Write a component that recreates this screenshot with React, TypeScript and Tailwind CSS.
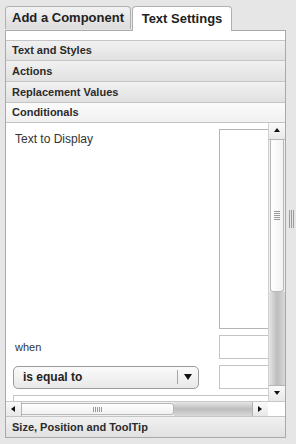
import React from "react";

const font = { fontFamily: '"Liberation Sans", Arial, sans-serif' };

function Header({ label, active }: { label: string; active?: boolean }) {
  return (
    <div
      className={`h-[21px] flex items-center pl-[6px] text-[11px] font-bold text-[#2b2b2b] border-b border-[#c4c4c4] ${
        active
          ? "bg-gradient-to-b from-[#fbfbfb] to-[#f1f1f1]"
          : "bg-gradient-to-b from-[#f1f1f1] to-[#e1e1e1]"
      }`}
    >
      {label}
    </div>
  );
}

function Arrow({ dir }: { dir: "up" | "down" | "left" | "right" }) {
  const pts = {
    up: "1,5 4,1 7,5",
    down: "1,1 4,5 7,1",
    left: "5,1 1,4 5,7",
    right: "1,1 5,4 1,7",
  }[dir];
  return (
    <svg width="8" height="8" viewBox="0 0 8 8">
      <polygon points={pts} fill="#111" />
    </svg>
  );
}

function VScrollbar() {
  return (
    <div className="w-[17px] flex flex-col bg-[#f0f0f0] border-l border-[#d0d0d0]">
      <div className="h-[17px] flex items-center justify-center bg-gradient-to-b from-[#fafafa] to-[#e8e8e8] border-b border-[#b5b5b5]">
        <Arrow dir="up" />
      </div>
      <div className="h-[152px] mx-[1px] rounded-b-[3px] bg-gradient-to-r from-[#ffffff] to-[#f2f2f2] border border-t-0 border-[#b8b8b8] flex items-center justify-center">
        <div className="flex flex-col gap-[1px]">
          {[0, 1, 2, 3, 4].map((i) => (
            <div key={i} className="w-[6px] h-[1px] bg-[#9a9a9a]" />
          ))}
        </div>
      </div>
      <div className="flex-1 bg-gradient-to-r from-[#e6e6e6] via-[#bdbdbd] to-[#d8d8d8]" />
      <div className="h-[16px] flex items-center justify-center bg-gradient-to-b from-[#fafafa] to-[#e8e8e8] border-t border-[#b5b5b5]">
        <Arrow dir="down" />
      </div>
    </div>
  );
}

function HScrollbar() {
  return (
    <div className="h-[15px] flex bg-[#f0f0f0] border-t border-[#c8c8c8]">
      <div className="w-[16px] flex items-center justify-center bg-gradient-to-b from-[#fafafa] to-[#e8e8e8] border-r border-[#b5b5b5]">
        <Arrow dir="left" />
      </div>
      <div className="w-[152px] my-[1px] rounded-r-[3px] bg-gradient-to-b from-[#ffffff] to-[#f1f1f1] border border-l-0 border-[#b8b8b8] flex items-center justify-center">
        <div className="flex gap-[1px]">
          {[0, 1, 2, 3, 4].map((i) => (
            <div key={i} className="w-[1px] h-[5px] bg-[#9a9a9a]" />
          ))}
        </div>
      </div>
      <div className="flex-1 bg-gradient-to-b from-[#e6e6e6] via-[#bdbdbd] to-[#d8d8d8]" />
      <div className="w-[16px] flex items-center justify-center bg-gradient-to-b from-[#fafafa] to-[#e8e8e8] border-l border-[#b5b5b5]">
        <Arrow dir="right" />
      </div>
      <div className="w-[17px] bg-white" />
    </div>
  );
}

export default function App() {
  return (
    <div className="w-[296px] h-[444px] bg-[#e6e6e6] flex" style={font}>
      <div className="w-[286px] pl-[5px] pt-[5px] flex flex-col">
        {/* tabs */}
        <div className="h-[25px] flex items-end gap-[1px] relative z-10">
          <div className="w-[126px] h-[23px] flex items-center justify-center text-[13px] font-bold text-[#222] bg-gradient-to-b from-[#f2f2f2] to-[#dcdcdc] border border-b-0 border-[#b0b0b0] rounded-t-[4px] mb-[1px]">
            Add a Component
          </div>
          <div className="w-[100px] h-[25px] flex items-center justify-center text-[13px] font-bold text-[#222] bg-white border border-b-0 border-[#b0b0b0] rounded-t-[4px] -mb-[1px]">
            Text Settings
          </div>
        </div>
        {/* panel */}
        <div className="w-[281px] h-[408px] border border-[#a9a9a9] bg-white flex flex-col">
          <div className="h-[10px] bg-white border-b border-[#c4c4c4]" />
          <Header label="Text and Styles" />
          <Header label="Actions" />
          <Header label="Replacement Values" />
          <Header label="Conditionals" active />
          <div className="flex flex-col h-[293px]">
            <div className="flex flex-1 min-h-0">
              <div className="flex-1 overflow-hidden relative">
                <div className="w-[320px] pt-[6px] text-[12px] text-[#333]">
                  <div className="flex">
                    <div className="w-[213px] pl-[9px] pt-[1px]">Text to Display</div>
                    <div className="w-[80px] h-[200px] border border-[#b5b5b5]" />
                  </div>
                  <div className="flex items-center mt-[6px]">
                    <div className="w-[213px] pl-[9px] text-[11px] text-[#333]">when</div>
                    <div className="w-[80px] h-[24px] border border-[#c4c4c4]" />
                  </div>
                  <div className="flex items-center mt-[6px]">
                    <div className="w-[213px] pl-[7px]">
                      <div className="w-[186px] h-[23px] rounded-[5px] border border-[#9a9a9a] bg-gradient-to-b from-[#fbfbfb] to-[#e8e8e8] flex items-center">
                        <div className="flex-1 pl-[9px] text-[12px] font-bold text-[#222]">is equal to</div>
                        <div className="w-[1px] h-[14px] bg-[#a5a5a5]" />
                        <div className="w-[20px] flex items-center justify-center">
                          <svg width="8" height="6" viewBox="0 0 8 6">
                            <polygon points="0,0 8,0 4,6" fill="#111" />
                          </svg>
                        </div>
                      </div>
                    </div>
                    <div className="w-[80px] h-[24px] border border-[#c4c4c4]" />
                  </div>
                  <div className="ml-[7px] mt-[6px] h-[20px] border-t border-l border-[#c4c4c4]" />
                </div>
              </div>
              <VScrollbar />
            </div>
            <HScrollbar />
          </div>
          <div className="h-[21px] flex items-center pl-[6px] text-[11px] font-bold text-[#2b2b2b] border-t border-[#c4c4c4] bg-gradient-to-b from-[#f1f1f1] to-[#e1e1e1]">
            Size, Position and ToolTip
          </div>
        </div>
      </div>
      {/* splitter */}
      <div className="w-[10px] h-full flex items-center justify-center pt-[10px]">
        <div className="flex gap-[1px] -mt-[16px]">
          <div className="w-[1px] h-[18px] bg-[#9c9c9c]" />
          <div className="w-[1px] h-[18px] bg-[#9c9c9c]" />
          <div className="w-[1px] h-[18px] bg-[#9c9c9c]" />
        </div>
      </div>
    </div>
  );
}
